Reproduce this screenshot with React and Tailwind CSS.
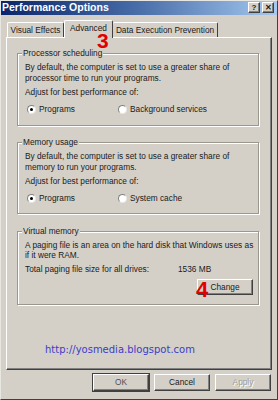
export default function App() {
  const raised =
    "border border-t-white border-l-white border-r-[#404040] border-b-[#404040] shadow-[inset_-1px_-1px_0_#808080]";
  const Radio = ({ checked }) => (
    <span className="w-[9px] h-[9px] rounded-full bg-white border border-t-[#808080] border-l-[#808080] border-r-[#e8e6e0] border-b-[#e8e6e0] flex items-center justify-center shrink-0">
      {checked && <span className="w-[3px] h-[3px] rounded-full bg-black" />}
    </span>
  );
  const Group = ({ label, h, mt, children }) => (
    <div
      className={`relative border border-[#9a978f] shadow-[inset_1px_1px_0_#fff,1px_1px_0_#fff] w-[242px] ${h} ${mt}`}
    >
      <span className="absolute -top-[6px] left-[4px] px-[1px] bg-[#d4d0c8] leading-[11px]">
        {label}
      </span>
      {children}
    </div>
  );
  return (
    <div className="w-[278px] h-[400px] bg-[#d4d0c8] relative overflow-hidden font-['Liberation_Sans',sans-serif] text-[8.3px] text-[#1a1a1a] border border-t-[#e8e6e0] border-l-[#e8e6e0] border-r-[#404040] border-b-[#404040]">
      {/* Title bar */}
      <div className="h-[15px] -mt-[1px] -mx-[1px] bg-linear-to-r from-[#0a246a] via-[#4a6ea8] to-[#a6caf0] flex items-center pl-[2px] pr-[4px]">
        <span className="text-white font-bold text-[10.5px] leading-none">
          Performance Options
        </span>
        <div className="ml-auto flex gap-[2px]">
          <span className={`w-[12px] h-[11px] bg-[#d4d0c8] ${raised} flex items-center justify-center text-[8px] font-bold leading-none`}>
            ?
          </span>
          <span className={`w-[12px] h-[11px] bg-[#d4d0c8] ${raised} flex items-center justify-center text-[8px] font-bold leading-none`}>
            ✕
          </span>
        </div>
      </div>

      <div className="px-[5px]">
        {/* Tabs */}
        <div className="h-[22px] flex items-end pl-[1px]">
          <div className="h-[15px] w-[57px] border-t border-l border-white border-r border-r-[#404040] rounded-t-[2px] flex items-center justify-center">
            Visual Effects
          </div>
          <div className="h-[18px] w-[49px] -mb-[1px] relative z-10 bg-[#d4d0c8] border-t border-l border-white border-r border-r-[#404040] rounded-t-[2px] flex items-start pt-[3px] justify-center">
            <span className="leading-[9px]">Advanced</span>
          </div>
          <div className="h-[15px] w-[105px] border-t border-white border-r border-r-[#404040] rounded-t-[2px] flex items-center justify-center">
            Data Execution Prevention
          </div>
        </div>

        {/* Panel */}
        <div className="h-[333px] border border-t-white border-l-white border-r-[#404040] border-b-[#404040] shadow-[inset_-1px_-1px_0_#808080] pl-[10px] flex flex-col">
          <Group label="Processor scheduling" h="h-[73px]" mt="mt-[15px]">
            <div className="pt-[8px] pl-[7px] leading-[11px]">
              <div>By default, the computer is set to use a greater share of</div>
              <div>processor time to run your programs.</div>
              <div className="mt-[3px]">Adjust for best performance of:</div>
              <div className="mt-[6px] flex items-center">
                <div className="w-[93px] flex items-center gap-[3px] pl-[2px]">
                  <Radio checked />
                  <span>Programs</span>
                </div>
                <div className="flex items-center gap-[3px]">
                  <Radio />
                  <span>Background services</span>
                </div>
              </div>
            </div>
          </Group>

          <Group label="Memory usage" h="h-[72px]" mt="mt-[16px]">
            <div className="pt-[8px] pl-[7px] leading-[11px]">
              <div>By default, the computer is set to use a greater share of</div>
              <div>memory to run your programs.</div>
              <div className="mt-[3px]">Adjust for best performance of:</div>
              <div className="mt-[6px] flex items-center">
                <div className="w-[93px] flex items-center gap-[3px] pl-[2px]">
                  <Radio checked />
                  <span>Programs</span>
                </div>
                <div className="flex items-center gap-[3px]">
                  <Radio />
                  <span>System cache</span>
                </div>
              </div>
            </div>
          </Group>

          <Group label="Virtual memory" h="h-[74px]" mt="mt-[17px]">
            <div className="pt-[8px] pl-[7px] leading-[10px]">
              <div>A paging file is an area on the hard disk that Windows uses as</div>
              <div>if it were RAM.</div>
              <div className="mt-[4px] flex">
                <span className="w-[153px]">Total paging file size for all drives:</span>
                <span>1536 MB</span>
              </div>
              <div className="mt-[5px] flex justify-end pr-[5px]">
                <div className={`w-[56px] h-[16px] ${raised} flex items-center justify-center`}>
                  Change
                </div>
              </div>
            </div>
          </Group>

          <div className="mt-[39px] pl-[28px] font-['DejaVu_Sans',sans-serif] text-[10px] text-[#3c3cc8] leading-[12px]">
            http://yosmedia.blogspot.com
          </div>
        </div>

        {/* Buttons */}
        <div className="mt-[4px] flex justify-end gap-[5px] pr-[1px]">
          <div className={`w-[56px] h-[17px] ${raised} outline outline-1 outline-[#404040] flex items-center justify-center text-[#505050]`}>
            OK
          </div>
          <div className={`w-[56px] h-[17px] ${raised} flex items-center justify-center`}>
            Cancel
          </div>
          <div className={`w-[56px] h-[17px] ${raised} flex items-center justify-center text-[#a09d96] [text-shadow:1px_1px_0_#fff]`}>
            Apply
          </div>
        </div>
      </div>

      {/* Red annotations */}
      <span className="absolute z-20 left-[96px] top-[33px] text-[21px] font-bold text-[#e00000] leading-[14px] font-['Liberation_Sans',sans-serif]">
        3
      </span>
      <span className="absolute z-20 left-[195px] top-[281px] text-[22px] font-bold text-[#e00000] leading-[15px] font-['Liberation_Sans',sans-serif]">
        4
      </span>
    </div>
  );
}
